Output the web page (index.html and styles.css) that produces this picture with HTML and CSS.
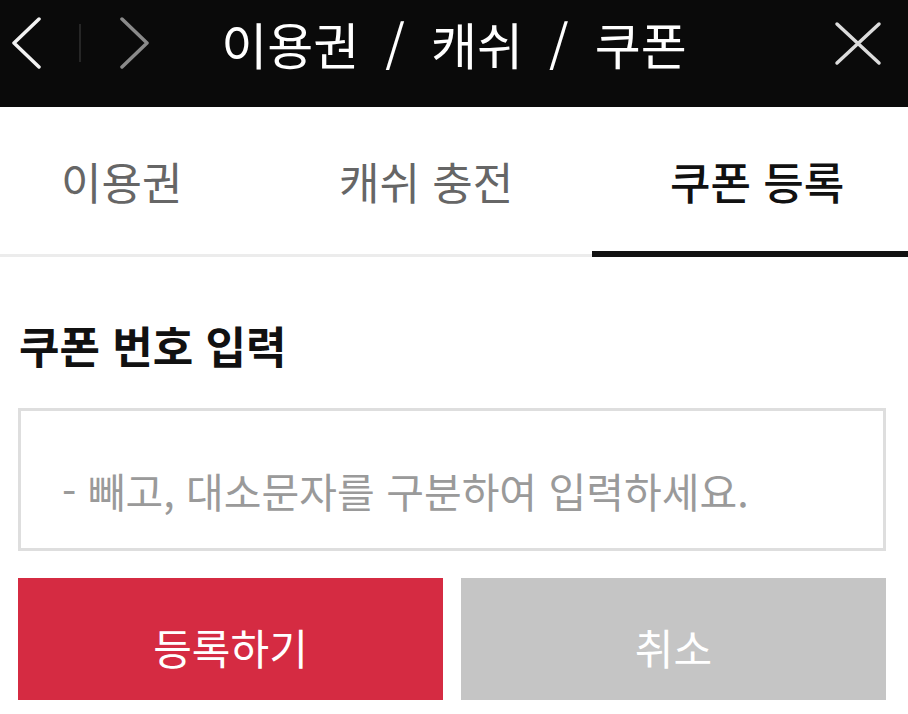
FILE: index.html
```html
<!DOCTYPE html>
<html lang="ko">
<head>
	<meta charset="UTF-8">
	<title>이용권 / 캐쉬 / 쿠폰</title>
	<link rel="stylesheet" href="styles.css">
</head>
<body>
	<!-- 상단 바 -->
	<div class="topbar">
		<div class="nav">
			<svg class="nav-btn" width="30" height="52" viewBox="0 0 30 52">
				<path d="M28 2 L3 26 L28 50" fill="none" stroke="#f2f2f2" stroke-width="3.5" stroke-linecap="round" stroke-linejoin="round"/>
			</svg>
			<span class="nav-line"></span>
			<svg class="nav-btn" width="30" height="52" viewBox="0 0 30 52">
				<path d="M2 2 L27 26 L2 50" fill="none" stroke="#8a8a8a" stroke-width="3.5" stroke-linecap="round" stroke-linejoin="round"/>
			</svg>
		</div>
		<h1 class="title">이용권 / 캐쉬 / 쿠폰</h1>
		<div class="close">
			<svg width="48" height="45" viewBox="0 0 48 45">
				<path d="M3 3 L45 42 M45 3 L3 42" fill="none" stroke="#dcdcdc" stroke-width="3.5" stroke-linecap="round"/>
			</svg>
		</div>
	</div>
	<!-- 탭 -->
	<div class="tabs">
		<div class="tab tab-1">이용권</div>
		<div class="tab tab-2">캐쉬 충전</div>
		<div class="tab tab-3 on">쿠폰 등록</div>
	</div>
	<!-- 쿠폰 입력 -->
	<div class="coupon">
		<h2 class="coupon-title">쿠폰 번호 입력</h2>
		<input class="coupon-input" type="text" placeholder="- 빼고, 대소문자를 구분하여 입력하세요.">
		<div class="btns">
			<button class="btn btn-ok">등록하기</button>
			<button class="btn btn-cancel">취소</button>
		</div>
	</div>
</body>
</html>
```

FILE: styles.css
```css
*{
	padding: 0;
	margin: 0;
	box-sizing: border-box;
}
body{
	font-family: "Noto Sans CJK KR", "Noto Sans", sans-serif;
	background: #fff;
	color: #111;
}
/*상단 바*/
.topbar{
	display: grid;
	grid-template-columns: 1fr auto 1fr;
	align-items: center;
	height: 107px;
	padding-bottom: 21px;
	background: #0a0a0a;
}
.nav{
	display: flex;
	align-items: center;
	padding-left: 11px;
}
.nav-btn{
	display: block;
}
.nav-line{
	display: block;
	width: 2px;
	height: 38px;
	margin: 0 39px 0 38px;
	background: #262626;
}
.title{
	color: #fff;
	font-size: 50px;
	font-weight: 400;
	word-spacing: 12px;
	line-height: 1;
}
.close{
	justify-self: end;
	padding-right: 26px;
}
.close>svg{
	display: block;
}
/*탭*/
.tabs{
	display: grid;
	grid-template-columns: 296px 296px 1fr;
	height: 150px;
	border-bottom: 3px solid #ececec;
}
.tab{
	display: flex;
	align-items: center;
	font-size: 44px;
	color: #666;
	line-height: 1;
}
.tab-1{
	padding-left: 61px;
}
.tab-2{
	padding-left: 43px;
}
.tab-3{
	padding-left: 78px;
}
.tab.on{
	color: #111;
	font-weight: 500;
	box-shadow: 0 3px 0 #111, inset 0 -3px 0 #111;
}
/*쿠폰 입력*/
.coupon{
	padding: 64px 22px 0 18px;
}
.coupon-title{
	font-size: 44px;
	font-weight: 700;
	line-height: 48px;
	padding-left: 1px;
}
.coupon-input{
	display: block;
	width: 100%;
	height: 143px;
	margin-top: 39px;
	padding: 20px 0 0 41px;
	border: 3px solid #dedede;
	font-family: inherit;
	font-size: 41px;
	color: #333;
	outline: none;
}
.coupon-input::placeholder{
	color: #9a9a9a;
}
.btns{
	display: grid;
	grid-template-columns: 1fr 1fr;
	gap: 18px;
	margin-top: 27px;
}
.btn{
	height: 122px;
	padding-top: 14px;
	border: none;
	font-family: inherit;
	font-size: 42px;
	color: #fff;
}
.btn-ok{
	background: #d52b42;
}
.btn-cancel{
	background: #c5c5c5;
}
```
